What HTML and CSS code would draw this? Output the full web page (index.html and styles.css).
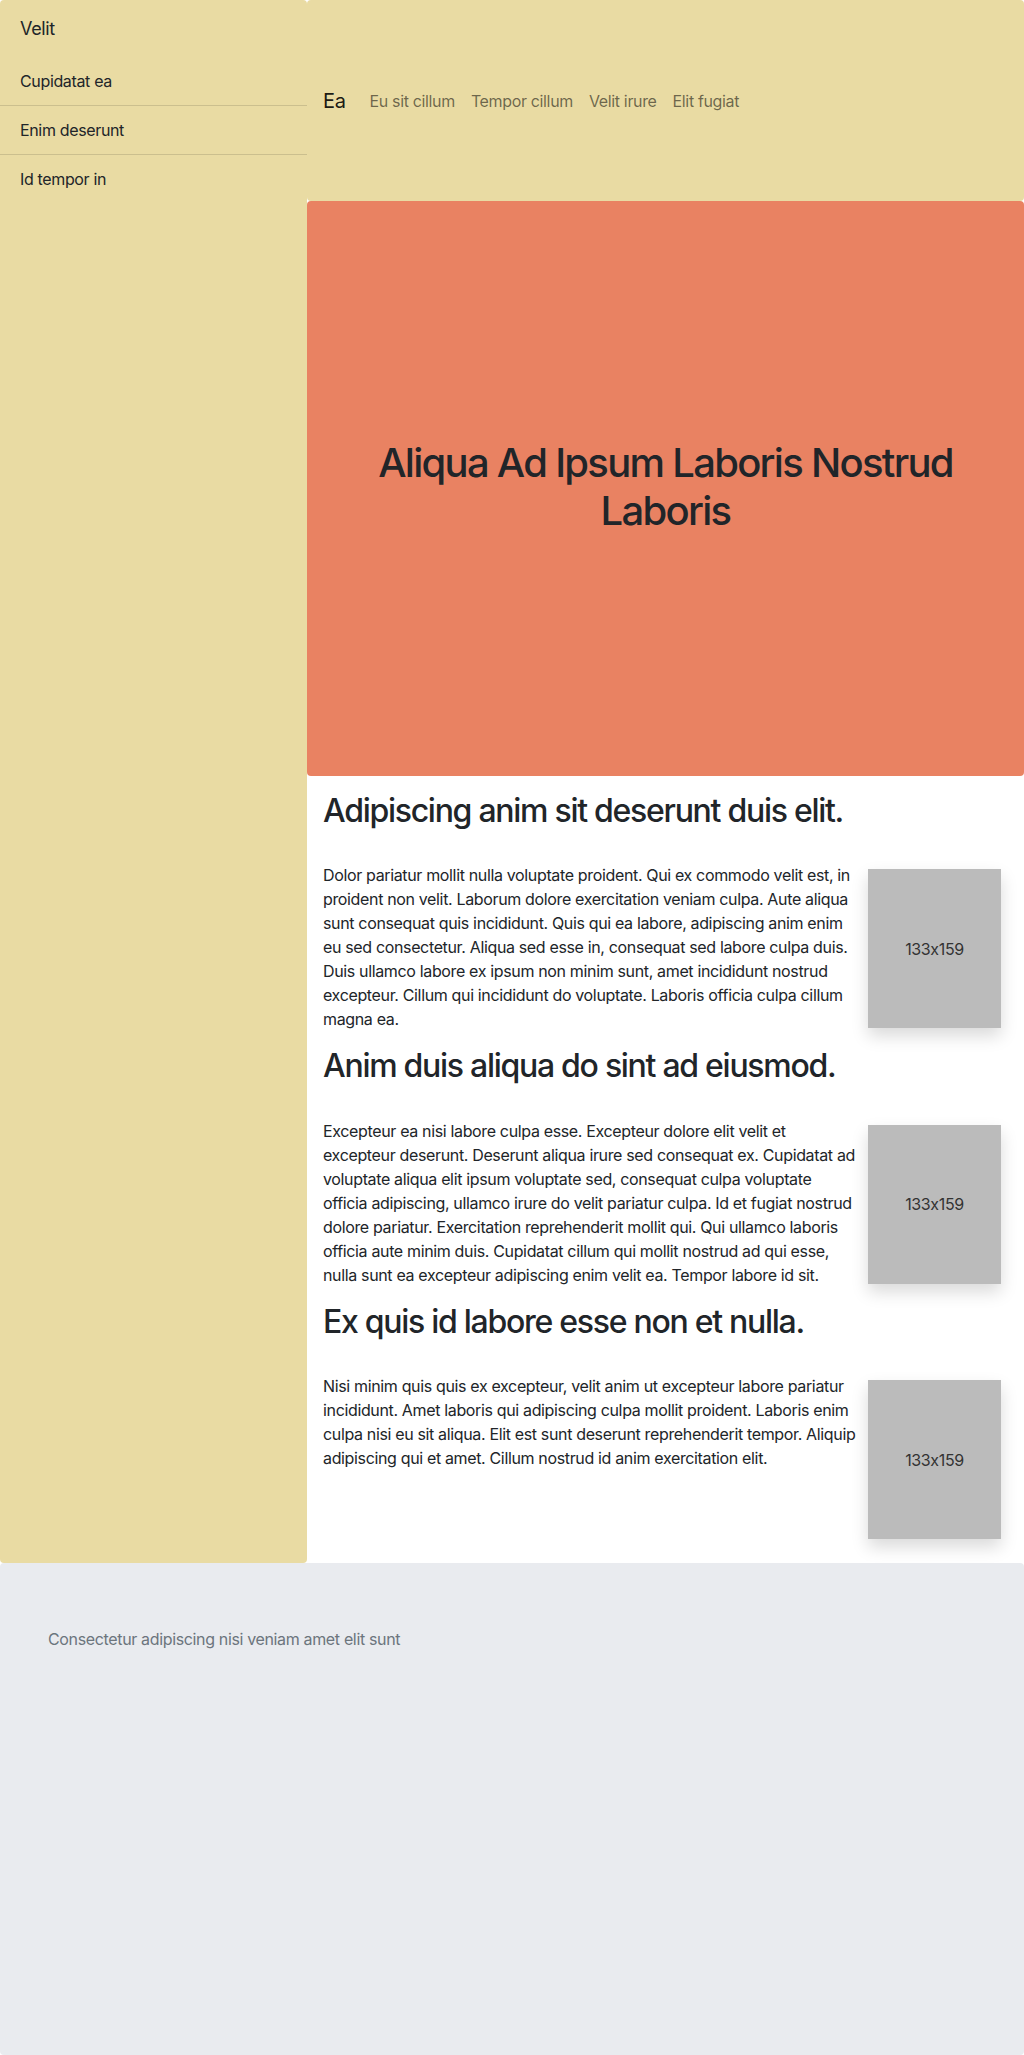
FILE: index.html
```html
<!DOCTYPE html>
<html lang="en">
<head>
<meta charset="utf-8">
<title>Velit</title>
<link rel="stylesheet" href="styles.css">
</head>
<body>
<div class="layout">
  <aside class="sidebar">
    <div class="sidebar-brand">Velit</div>
    <ul class="side-list">
      <li class="side-item">Cupidatat ea</li>
      <li class="side-item">Enim deserunt</li>
      <li class="side-item">Id tempor in</li>
    </ul>
  </aside>
  <main class="main">
    <nav class="topnav">
      <span class="brand">Ea</span>
      <ul class="nav-links">
        <li class="nav-link">Eu sit cillum</li>
        <li class="nav-link">Tempor cillum</li>
        <li class="nav-link">Velit irure</li>
        <li class="nav-link">Elit fugiat</li>
      </ul>
    </nav>
    <header class="hero">
      <h1 class="hero-title">Aliqua Ad Ipsum Laboris Nostrud Laboris</h1>
    </header>
    <article class="content">
      <section class="block">
        <h2 class="block-title">Adipiscing anim sit deserunt duis elit.</h2>
        <div class="block-row">
          <p class="block-text">Dolor pariatur mollit nulla voluptate proident. Qui ex commodo velit est, in proident non velit. Laborum dolore exercitation veniam culpa. Aute aliqua sunt consequat quis incididunt. Quis qui ea labore, adipiscing anim enim eu sed consectetur. Aliqua sed esse in, consequat sed labore culpa duis. Duis ullamco labore ex ipsum non minim sunt, amet incididunt nostrud excepteur. Cillum qui incididunt do voluptate. Laboris officia culpa cillum magna ea.</p>
          <div class="placeholder">133x159</div>
        </div>
      </section>
      <section class="block">
        <h2 class="block-title">Anim duis aliqua do sint ad eiusmod.</h2>
        <div class="block-row">
          <p class="block-text">Excepteur ea nisi labore culpa esse. Excepteur dolore elit velit et excepteur deserunt. Deserunt aliqua irure sed consequat ex. Cupidatat ad voluptate aliqua elit ipsum voluptate sed, consequat culpa voluptate officia adipiscing, ullamco irure do velit pariatur culpa. Id et fugiat nostrud dolore pariatur. Exercitation reprehenderit mollit qui. Qui ullamco laboris officia aute minim duis. Cupidatat cillum qui mollit nostrud ad qui esse, nulla sunt ea excepteur adipiscing enim velit ea. Tempor labore id sit.</p>
          <div class="placeholder">133x159</div>
        </div>
      </section>
      <section class="block">
        <h2 class="block-title">Ex quis id labore esse non et nulla.</h2>
        <div class="block-row">
          <p class="block-text">Nisi minim quis quis ex excepteur, velit anim ut excepteur labore pariatur incididunt. Amet laboris qui adipiscing culpa mollit proident. Laboris enim culpa nisi eu sit aliqua. Elit est sunt deserunt reprehenderit tempor. Aliquip adipiscing qui et amet. Cillum nostrud id anim exercitation elit.</p>
          <div class="placeholder">133x159</div>
        </div>
      </section>
    </article>
  </main>
</div>
<footer class="footer">
  <p class="footer-text">Consectetur adipiscing nisi veniam amet elit sunt</p>
</footer>
</body>
</html>
```

FILE: styles.css
```css
* {
  box-sizing: border-box;
}

html, body {
  margin: 0;
  padding: 0;
}

body {
  font-family: "Inter", "Liberation Sans", sans-serif;
  font-size: 16px;
  line-height: 1.5;
  letter-spacing: -0.35px;
  font-feature-settings: "calt" 0;
  color: #212529;
  background: #ffffff;
}

.layout {
  display: grid;
  grid-template-columns: 307px 1fr;
}

.sidebar {
  background: #e9dba3;
  border-radius: 4px;
}

.sidebar-brand {
  font-size: 18px;
  line-height: 27px;
  padding: 15px 20px;
  color: #212529;
}

.side-list {
  list-style: none;
  margin: 0;
  padding: 0;
}

.side-item {
  padding: 12px 20px;
  line-height: 24px;
  border-bottom: 1px solid rgba(0, 0, 0, 0.125);
}

.side-item:last-child {
  border-bottom: none;
}

.main {
  display: flex;
  flex-direction: column;
  min-width: 0;
}

.topnav {
  height: 201px;
  background: #e9dba3;
  border-radius: 4px;
  display: flex;
  align-items: center;
  padding: 0 16px;
}

.brand {
  font-size: 20px;
  line-height: 30px;
  color: rgba(0, 0, 0, 0.9);
  margin-right: 16px;
}

.nav-links {
  list-style: none;
  margin: 0;
  padding: 0;
  display: flex;
}

.nav-link {
  padding: 8px;
  color: rgba(0, 0, 0, 0.55);
}

.hero {
  height: 575px;
  background: #e98262;
  border-radius: 4px;
  display: flex;
  align-items: center;
  justify-content: center;
  padding: 0 48px;
}

.hero-title {
  margin: 0 0 4px;
  font-size: 40px;
  font-weight: 500;
  line-height: 1.2;
  letter-spacing: -0.043em;
  text-align: center;
  color: #212529;
}

.content {
  padding: 16px 23px 24px 16px;
}

.block + .block {
  margin-top: 16px;
}

.block-title {
  margin: 0 0 33px;
  font-size: 32px;
  font-weight: 500;
  line-height: 1.2;
  letter-spacing: -0.04em;
}

.block-row {
  display: flex;
  align-items: flex-start;
  gap: 10px;
}

.block-text {
  flex: 1;
  margin: 0;
}

.placeholder {
  flex: none;
  width: 133px;
  height: 159px;
  margin-top: 6px;
  background: #bbbbbb;
  color: #333333;
  display: flex;
  align-items: center;
  justify-content: center;
  box-shadow: 0 8px 16px rgba(0, 0, 0, 0.15);
}

.footer {
  background: #e9ebef;
  border-radius: 4px;
  min-height: 492px;
  padding: 64px 48px;
}

.footer-text {
  margin: 0;
  color: #6c757d;
}
```
